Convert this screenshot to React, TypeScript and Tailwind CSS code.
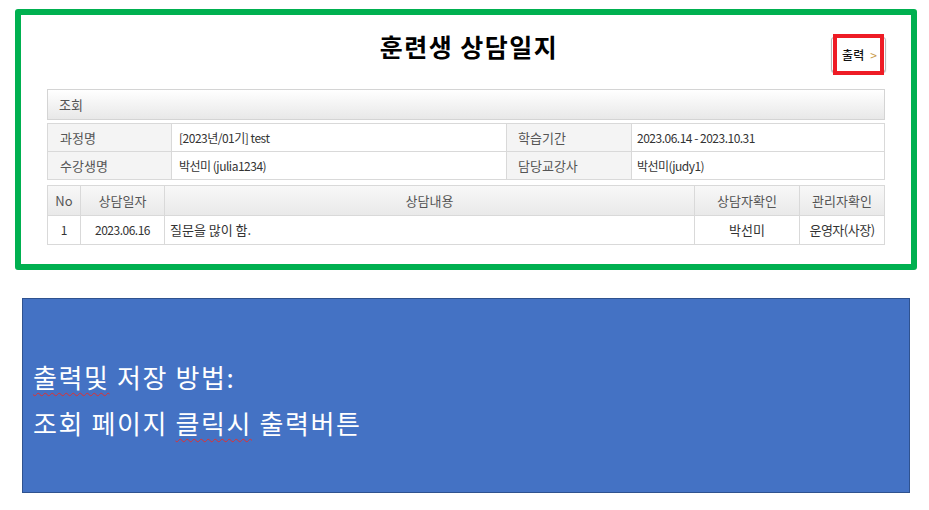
import React from 'react';

const font = { fontFamily: '"Noto Sans CJK KR", "Noto Sans", sans-serif' };

const info = [
  ['과정명', '[2023년/01기] test', '학습기간', '2023.06.14 - 2023.10.31'],
  ['수강생명', '박선미 (julia1234)', '담당교강사', '박선미(judy1)'],
];

export default function App() {
  return (
    <div className="bg-white w-[929px] h-[510px] pt-[9px]" style={font}>
      {/* captured page */}
      <div className="ml-[15px] w-[902px] h-[261px] border-[6px] border-[#00b050] rounded-[3px] bg-white px-[26px] relative">
        <div className="h-[74px] pt-[13px] flex justify-center">
          <h1 className="text-[25px] leading-[36px] font-bold text-black tracking-[1.5px] pl-[6px]">훈련생 상담일지</h1>
        </div>
        <div className="absolute top-[22px] right-[25px] w-[55px] h-[35px] border border-[#b8b8b8] rounded-[3px] bg-white shadow-[0_1px_1px_rgba(0,0,0,0.25)] flex items-center justify-center gap-[6px] pl-[2px]">
          <span className="text-[12px] font-medium text-[#111]">출력</span>
          <span className="text-[12px] text-[#c99a4a]">&gt;</span>
        </div>
        <div className="absolute top-[19px] right-[27px] w-[51px] h-[41px] border-[4px] border-[#ee1c25]" />

        <div className="h-[31px] border border-[#d4d4d4] bg-gradient-to-b from-white to-[#e8e8e8] flex items-center pl-[11px] text-[13px] text-[#555]">
          조회
        </div>

        <table className="mt-[3px] w-full border-collapse table-fixed text-[12px] text-[#333]">
          <colgroup>
            <col className="w-[124px]" />
            <col className="w-[335px]" />
            <col className="w-[125px]" />
            <col />
          </colgroup>
          <tbody>
            {info.map((r) => (
              <tr key={r[0]} className="h-[28px]">
                <td className="border border-[#d9d9d9] bg-[#f4f4f4] pl-[12px] text-[13px] text-[#555]">{r[0]}</td>
                <td className="border border-[#d9d9d9] pl-[7px] tracking-[-0.5px]">{r[1]}</td>
                <td className="border border-[#d9d9d9] bg-[#f4f4f4] pl-[11px] text-[13px] text-[#555]">{r[2]}</td>
                <td className="border border-[#d9d9d9] pl-[5px] tracking-[-0.5px]">{r[3]}</td>
              </tr>
            ))}
          </tbody>
        </table>

        <table className="mt-[5px] w-full border-collapse table-fixed text-[12px] text-[#333]">
          <colgroup>
            <col className="w-[33px]" />
            <col className="w-[84px]" />
            <col />
            <col className="w-[105px]" />
            <col className="w-[85px]" />
          </colgroup>
          <thead>
            <tr className="h-[30px] bg-gradient-to-b from-[#f8f8f8] to-[#e9e9e9] text-[13px] text-[#555]">
              <th className="border border-[#d9d9d9] font-normal">No</th>
              <th className="border border-[#d9d9d9] font-normal">상담일자</th>
              <th className="border border-[#d9d9d9] font-normal">상담내용</th>
              <th className="border border-[#d9d9d9] font-normal">상담자확인</th>
              <th className="border border-[#d9d9d9] font-normal">관리자확인</th>
            </tr>
          </thead>
          <tbody>
            <tr className="h-[29px]">
              <td className="border border-[#d9d9d9] text-center">1</td>
              <td className="border border-[#d9d9d9] text-center tracking-[-0.5px]">2023.06.16</td>
              <td className="border border-[#d9d9d9] pl-[5px] text-[13px]">질문을 많이 함.</td>
              <td className="border border-[#d9d9d9] text-center text-[13px]">박선미</td>
              <td className="border border-[#d9d9d9] text-center text-[13px] tracking-[-0.5px]">운영자(사장)</td>
            </tr>
          </tbody>
        </table>
      </div>

      {/* note box */}
      <div className="mt-[28px] ml-[22px] w-[888px] h-[195px] bg-[#4472c4] border border-[#2f528f] pt-[55px] pl-[10px] text-white text-[26px] leading-[46px] tracking-[1.6px]">
        <p>
          <span className="underline decoration-wavy decoration-[#e03030] decoration-1 underline-offset-[4px]">출력및</span> 저장 방법:
        </p>
        <p>
          조회 페이지 <span className="underline decoration-wavy decoration-[#e03030] decoration-1 underline-offset-[4px]">클릭시</span> 출력버튼
        </p>
      </div>
    </div>
  );
}
